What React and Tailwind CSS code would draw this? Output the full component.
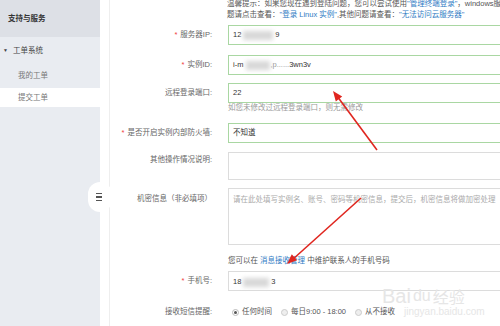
export default function App() {
  const font = "font-['Liberation_Sans','Noto_Sans_CJK_SC',sans-serif]"

  const Blur = ({ w }) => (
    <span className={`inline-block h-[9px] ${w} bg-[#d8d8d8] blur-[2px] align-middle`} />
  )

  const Label = ({ req, children, top }) => (
    <div
      className={`w-[102px] shrink-0 text-right text-[#666] ${top ? 'pt-[2px]' : 'self-center'}`}
    >
      {req && <span className="text-[#f04040] mr-[3px]">*</span>}
      {children}
    </div>
  )

  const Input = ({ green, h = 'h-[20px]', children }) => (
    <div
      className={`ml-[16px] w-[300px] shrink-0 ${h} border bg-white px-[4px] flex ${
        green ? 'border-[#a9d7a2] items-center' : 'border-[#dcdcdc] items-start pt-[5px]'
      } text-[#333]`}
    >
      {children}
    </div>
  )

  return (
    <div className={`w-[500px] h-[326px] overflow-hidden bg-white flex relative text-[7.5px] ${font}`}>
      {/* sidebar */}
      <div className="w-[100px] shrink-0 bg-[#e9ecf1] flex flex-col">
        <div className="h-[37px] bg-[#dde0e6] flex items-center pl-[8px] text-[#333] font-bold text-[7.5px]">
          支持与服务
        </div>
        <div className="h-[27px] flex items-center pl-[3px] text-[#444]">
          <span className="text-[5px] mr-[5px]">▼</span>
          工单系统
        </div>
        <div className="h-[24px] flex items-center pl-[18px] text-[#777]">我的工单</div>
        <div className="h-[19px] flex items-center pl-[18px] text-[#777] bg-white">提交工单</div>
      </div>
      <div className="w-[10px] shrink-0 border-r border-[#eeeeee]" />

      {/* collapse handle */}
      <div className="absolute left-[88px] top-[182px] w-[24px] h-[30px] rounded-full bg-white flex items-center justify-end pr-[10px]">
        <div className="flex flex-col gap-[2px]">
          <span className="block w-[6px] h-[1.5px] bg-[#555]" />
          <span className="block w-[6px] h-[1.5px] bg-[#555]" />
          <span className="block w-[6px] h-[1.5px] bg-[#555]" />
        </div>
      </div>

      {/* main form */}
      <div className="flex-1 flex flex-col">
        <div className="mt-[-2px] ml-[117px] leading-[11px] text-[#555] whitespace-nowrap">
          <div>
            温馨提示：如果您现在遇到登陆问题，您可以尝试使用
            <span className="text-[#2f7bc4]">"管理终端登录"</span>，windows服务器
          </div>
          <div>
            题请点击查看：<span className="text-[#2f7bc4]">"登录 Linux 实例"</span>,其他问题请查看：
            <span className="text-[#2f7bc4]">"无法访问云服务器"</span>
          </div>
        </div>

        <div className="flex mt-[5px]">
          <Label req>服务器IP:</Label>
          <Input green>
            12<span className="ml-[2px] mr-[2px]"><Blur w="w-[30px]" /></span>9
          </Input>
        </div>

        <div className="flex mt-[10px]">
          <Label req>实例ID:</Label>
          <Input green>
            i-m<span className="ml-[3px]"><Blur w="w-[24px]" /></span>
            <span className="text-[#999]">,p......</span>3wn3v
          </Input>
        </div>

        <div className="flex mt-[8px]">
          <Label>远程登录端口:</Label>
          <Input green>22</Input>
        </div>
        <div className="ml-[118px] h-[10px] leading-[10px] text-[#999]">如您未修改过远程登录端口，则无需修改</div>

        <div className="flex mt-[10px]">
          <Label req>是否开启实例内部防火墙:</Label>
          <Input green>不知道</Input>
        </div>

        <div className="flex mt-[9px]">
          <Label top>其他操作情况说明:</Label>
          <Input h="h-[28px]" />
        </div>

        <div className="flex mt-[8px]">
          <div className="w-[102px] shrink-0 text-right text-[#666] pt-[5px]">机密信息（非必填项）</div>
          <Input h="h-[57px]">
            <span className="text-[#aaa] whitespace-nowrap">
              请在此处填写实例名、账号、密码等机密信息，提交后，机密信息将做加密处理
            </span>
          </Input>
        </div>

        <div className="ml-[118px] mt-[11px] h-[10px] leading-[10px] text-[#555] whitespace-nowrap">
          您可以在 <span className="text-[#2f7bc4]">消息接收管理</span> 中维护联系人的手机号码
        </div>

        <div className="flex mt-[5px]">
          <Label req>手机号:</Label>
          <Input green={false} h="h-[20px]">
            <span className="-mt-[1px] flex items-center">
              18<span className="ml-[2px] mr-[2px]"><Blur w="w-[26px]" /></span>3
            </span>
          </Input>
        </div>

        <div className="flex mt-[16px] h-[10px] items-center">
          <Label>接收短信提醒:</Label>
          <div className="ml-[20px] flex items-center text-[#555] whitespace-nowrap">
            <span className="w-[7px] h-[7px] rounded-full border border-[#bbb] flex items-center justify-center">
              <span className="w-[3px] h-[3px] rounded-full bg-[#555]" />
            </span>
            <span className="ml-[3px]">任何时间</span>
            <span className="ml-[9px] w-[7px] h-[7px] rounded-full border border-[#ccc] bg-[#eee]" />
            <span className="ml-[3px]">每日9:00 - 18:00</span>
            <span className="ml-[9px] w-[7px] h-[7px] rounded-full border border-[#ccc] bg-[#eee]" />
            <span className="ml-[3px]">从不接收</span>
          </div>
        </div>
      </div>

      {/* watermark */}
      <div className="absolute left-[382px] top-[286px] text-[#e6e6e6] pointer-events-none">
        <div className="flex items-end text-[20px] leading-[20px] font-['Liberation_Sans',sans-serif]">
          <span>Bai</span>
          <span className="ml-[2px] mr-[2px] text-[16px]">du</span>
          <span className="text-[16px] font-['Noto_Sans_CJK_SC',sans-serif]">经验</span>
        </div>
        <div className="text-[10px] leading-[12px] ml-[22px] font-['Liberation_Sans',sans-serif]">
          jingyan.baidu.com
        </div>
      </div>

      {/* annotation arrows */}
      <svg className="absolute inset-0 pointer-events-none" width="500" height="326">
        <line x1="377" y1="150" x2="337" y2="96" stroke="#e0261f" strokeWidth="1.6" />
        <polygon points="333,91 342.2,96.6 335.8,101.4" fill="#e0261f" />
        <line x1="361" y1="198" x2="292" y2="260" stroke="#e0261f" strokeWidth="1.6" />
        <polygon points="287,264 297.1,260.3 291.8,254.3" fill="#e0261f" />
      </svg>
    </div>
  )
}
